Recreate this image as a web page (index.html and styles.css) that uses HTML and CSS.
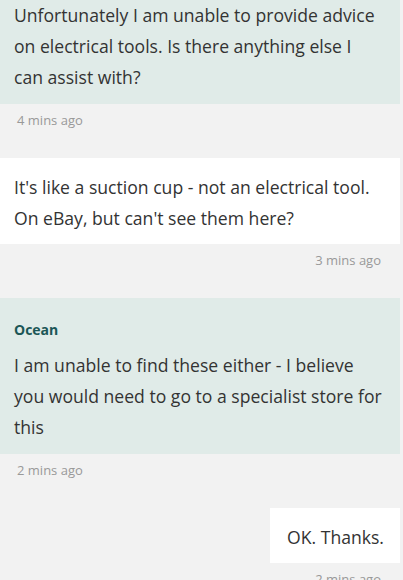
FILE: index.html
```html
<!DOCTYPE html>
<html>
<head>
<meta charset="utf-8">
<link rel="stylesheet" href="styles.css">
</head>
<body>
<div class="chat">
  <div class="msg agent first">
    <div class="bubble">
      <p class="text">Unfortunately I am unable to provide advice on electrical tools. Is there anything else I can assist with?</p>
    </div>
    <div class="time">4 mins ago</div>
  </div>
  <div class="msg user">
    <div class="bubble">
      <p class="text">It's like a suction cup - not an electrical tool. On eBay, but can't see them here?</p>
    </div>
    <div class="time">3 mins ago</div>
  </div>
  <div class="msg agent">
    <div class="bubble">
      <div class="name">Ocean</div>
      <p class="text">I am unable to find these either - I believe you would need to go to a specialist store for this</p>
    </div>
    <div class="time">2 mins ago</div>
  </div>
  <div class="msg user">
    <div class="bubble">
      <p class="text">OK. Thanks.</p>
    </div>
    <div class="time">2 mins ago</div>
  </div>
</div>
</body>
</html>
```
FILE: styles.css
```css
html, body {
  margin: 0;
  padding: 0;
  background: #f2f2f2;
  height: 100%;
  overflow: hidden;
}
body {
  font-family: "Open Sans", "Noto Sans", sans-serif;
  color: #333;
}
.chat {
  width: 400px;
  display: flex;
  flex-direction: column;
  margin-top: -14px;
}
.msg {
  display: flex;
  flex-direction: column;
  margin-bottom: 28px;
}
.bubble {
  padding: 14px 15px 11px 14px;
}
.agent .bubble {
  background: #e0ebe8;
}
.user {
  align-items: flex-end;
}
.user .bubble {
  background: #fff;
  padding: 14px 16px 10px 14px;
}
.user:last-child .bubble {
  padding-left: 17px;
}
.text {
  margin: 0;
  font-size: 17.6px;
  line-height: 31px;
}
.name {
  font-weight: 700;
  color: #1b5656;
  font-size: 14px;
  line-height: 20px;
  margin: 8px 0 10px;
}
.time {
  font-size: 13px;
  line-height: 20px;
  color: #999;
  margin-top: 6px;
  padding: 0 17px;
}
.user .time {
  padding: 0 19px;
}
```
